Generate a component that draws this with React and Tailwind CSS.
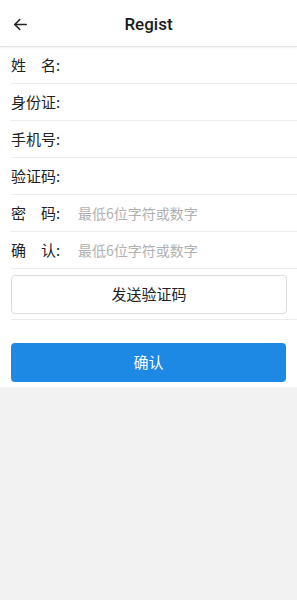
const Row = ({ label, placeholder }) => (
  <div className="flex items-center h-[37px] ml-[11px] border-b border-[#ececec]">
    <span className="w-[67px] shrink-0 text-[15px] text-[#222] whitespace-pre">{label}</span>
    {placeholder && <span className="text-[14px] text-[#b0b0b0]">{placeholder}</span>}
  </div>
);

export default function App() {
  return (
    <div className="min-h-[600px] bg-[#f2f2f2] font-['Noto_Sans_CJK_SC',sans-serif]">
      <div className="bg-white">
        <div className="relative flex items-center justify-center h-[47px] border-b border-[#e4e4e4] shadow-[0_1px_2px_rgba(0,0,0,0.06)]">
          <svg className="absolute left-[12px] top-[16px]" width="17" height="17" viewBox="0 0 24 24" fill="none" stroke="#222" strokeWidth="2.2" strokeLinecap="round" strokeLinejoin="round">
            <path d="M20 12H4" />
            <path d="M11 5l-7 7 7 7" />
          </svg>
          <span className="pt-[3px] text-[17px] font-medium text-[#1a1a1a] font-['Roboto',sans-serif]">Regist</span>
        </div>
        <div>
          <Row label={"姓　名:"} />
          <Row label={"身份证:"} />
          <Row label={"手机号:"} />
          <Row label={"验证码:"} />
          <Row label={"密　码:"} placeholder="最低6位字符或数字" />
          <Row label={"确　认:"} placeholder="最低6位字符或数字" />
        </div>
        <div className="ml-[11px] pr-[10px] pt-[6px] pb-[5px] border-b border-[#ececec]">
          <button className="w-full h-[39px] rounded-[4px] border border-[#dcdcdc] bg-white text-[15px] text-[#222]">
            发送验证码
          </button>
        </div>
        <div className="px-[11px] pt-[23px] pb-[5px]">
          <button className="w-full h-[39px] rounded-[4px] bg-[#1e88e5] text-[15px] text-white">
            确认
          </button>
        </div>
      </div>
    </div>
  );
}
